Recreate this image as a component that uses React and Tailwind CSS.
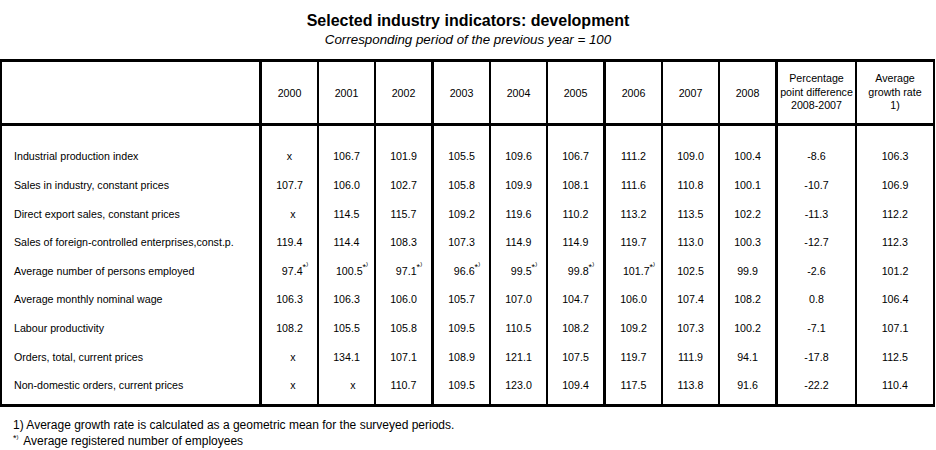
import React from "react";

const cols = [
  "w-[260px] border-r-[3px]",
  "w-[57px] border-r-2",
  "w-[57px] border-r-2",
  "w-[58px] border-r-[3px]",
  "w-[57px] border-r-2",
  "w-[57px] border-r-2",
  "w-[58px] border-r-[3px]",
  "w-[57px] border-r-2",
  "w-[57px] border-r-2",
  "w-[58px] border-r-[3px]",
  "w-[79px] border-r-2",
  "w-[76px]",
];

const years = ["2000", "2001", "2002", "2003", "2004", "2005", "2006", "2007", "2008"];

const rows = [
  ["Industrial production index", ["x", "106.7", "101.9", "105.5", "109.6", "106.7", "111.2", "109.0", "100.4"], "-8.6", "106.3"],
  ["Sales in industry, constant prices", ["107.7", "106.0", "102.7", "105.8", "109.9", "108.1", "111.6", "110.8", "100.1"], "-10.7", "106.9"],
  ["Direct export sales, constant prices", ["x", "114.5", "115.7", "109.2", "119.6", "110.2", "113.2", "113.5", "102.2"], "-11.3", "112.2"],
  ["Sales of foreign-controlled enterprises,const.p.", ["119.4", "114.4", "108.3", "107.3", "114.9", "114.9", "119.7", "113.0", "100.3"], "-12.7", "112.3"],
  ["Average number of persons employed", ["97.4*", "100.5*", "97.1*", "96.6*", "99.5*", "99.8*", "101.7*", "102.5", "99.9"], "-2.6", "101.2"],
  ["Average monthly nominal wage", ["106.3", "106.3", "106.0", "105.7", "107.0", "104.7", "106.0", "107.4", "108.2"], "0.8", "106.4"],
  ["Labour productivity", ["108.2", "105.5", "105.8", "109.5", "110.5", "108.2", "109.2", "107.3", "100.2"], "-7.1", "107.1"],
  ["Orders, total, current prices", ["x", "134.1", "107.1", "108.9", "121.1", "107.5", "119.7", "111.9", "94.1"], "-17.8", "112.5"],
  ["Non-domestic orders, current prices", ["x", "x", "110.7", "109.5", "123.0", "109.4", "117.5", "113.8", "91.6"], "-22.2", "110.4"],
];

// small nudges so the odd cells sit where the sheet put them
const nudge = {
  "2-0": "pl-[7px]",
  "7-0": "pl-[7px]",
  "8-0": "pl-[7px]",
  "8-1": "pl-[13px]",
};

function Star() {
  return (
    <>
      <span className="relative -top-[3px] text-[9px]">*</span>
      <span className="relative -top-[6px] text-[6px]">)</span>
    </>
  );
}

function Value({ v }) {
  if (v.endsWith("*")) {
    return (
      <>
        {v.slice(0, -1)}
        <Star />
      </>
    );
  }
  return v;
}

export default function App() {
  return (
    <div className="w-[936px] h-[450px] bg-white text-black font-['Liberation_Sans',Arial,sans-serif] pt-[12px]">
      <h1 className="text-center text-[16px] font-bold leading-[18px]">
        Selected industry indicators: development
      </h1>
      <p className="mt-[2px] text-center text-[13.33px] italic leading-[16px]">
        Corresponding period of the previous year = 100
      </p>

      <div className="mt-[11px] w-[935px] border-l-2 border-r-2 border-y-[3px] border-black text-[10.67px]">
        {/* header */}
        <div className="flex h-[64px] border-b-[3px] border-black">
          <div className={`${cols[0]} shrink-0 border-black`} />
          {years.map((y, i) => (
            <div
              key={y}
              className={`${cols[i + 1]} shrink-0 border-black flex items-center justify-center`}
            >
              {y}
            </div>
          ))}
          <div className={`${cols[10]} shrink-0 border-black flex items-center justify-center text-center leading-[13.5px]`}>
            Percentage
            <br />
            point difference
            <br />
            2008-2007
          </div>
          <div className={`${cols[11]} shrink-0 flex items-center justify-center text-center leading-[13.5px]`}>
            Average
            <br />
            growth rate
            <br />
            1)
          </div>
        </div>

        {/* spacer */}
        <div className="flex h-[16px]">
          {cols.map((c, i) => (
            <div key={i} className={`${c} shrink-0 border-black`} />
          ))}
        </div>

        {rows.map(([label, vals, diff, avg], r) => (
          <div key={label} className="flex h-[28.625px]">
            <div className={`${cols[0]} shrink-0 border-black flex items-center pl-[12px] whitespace-nowrap`}>
              {label}
            </div>
            {vals.map((v, i) => (
              <div
                key={i}
                className={`${cols[i + 1]} shrink-0 border-black flex items-center justify-center whitespace-nowrap ${
                  v.endsWith("*") ? "pl-[11px]" : nudge[`${r}-${i}`] || ""
                }`}
              >
                <Value v={v} />
              </div>
            ))}
            <div className={`${cols[10]} shrink-0 border-black flex items-center justify-center`}>
              {diff}
            </div>
            <div className={`${cols[11]} shrink-0 flex items-center justify-center`}>{avg}</div>
          </div>
        ))}

        {/* bottom spacer */}
        <div className="flex h-[4.375px]">
          {cols.map((c, i) => (
            <div key={i} className={`${c} shrink-0 border-black`} />
          ))}
        </div>
      </div>

      <div className="mt-[10px] pl-[13px] text-[12px] leading-[16px]">
        <p>1) Average growth rate is calculated as a geometric mean for the surveyed periods.</p>
        <p>
          <span className="relative -top-[4px] text-[9px]">*</span>
          <span className="relative -top-[6px] text-[6px]">)</span>
          <span className="ml-[2px]"> Average registered number of employees</span>
        </p>
      </div>
    </div>
  );
}
